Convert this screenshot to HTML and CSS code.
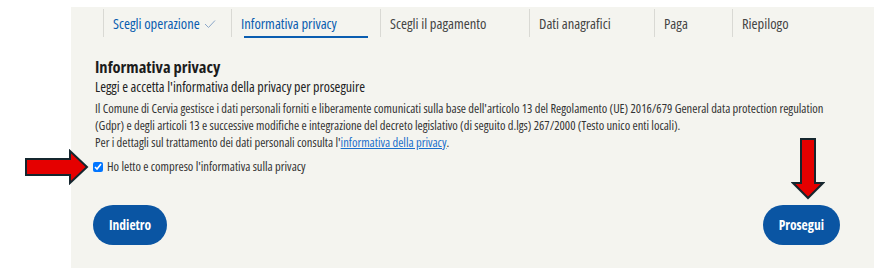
FILE: index.html
```html
<!DOCTYPE html>
<html lang="it">
  <head>
    <meta charset="UTF-8" />
    <title>Informativa privacy</title>
    <link rel="stylesheet" href="styles.css">
  </head>
  <body>
    <div class="panel">
      <ul class="steps">
        <li class="done">Scegli operazione <svg width="12" height="10" viewBox="0 0 12 10"><path d="M1 5 L4.5 8.5 L11 1.5" fill="none" stroke="#8aa6c8" stroke-width="1"/></svg></li>
        <li class="active">Informativa privacy</li>
        <li>Scegli il pagamento</li>
        <li>Dati anagrafici</li>
        <li>Paga</li>
        <li>Riepilogo</li>
      </ul>

      <div class="content">
        <h2>Informativa privacy</h2>
        <p class="lead">Leggi e accetta l'informativa della privacy per proseguire</p>
        <p class="text">Il Comune di Cervia gestisce i dati personali forniti e liberamente comunicati sulla base dell'articolo 13 del Regolamento (UE) 2016/679 General data protection regulation (Gdpr) e degli articoli 13 e successive modifiche e integrazione del decreto legislativo (di seguito d.lgs) 267/2000 (Testo unico enti locali).<br>Per i dettagli sul trattamento dei dati personali consulta l'<a href="#">informativa della privacy</a>.</p>
        <label class="check"><input type="checkbox" checked> Ho letto e compreso l'informativa sulla privacy</label>

        <div class="actions">
          <button class="btn">Indietro</button>
          <button class="btn">Prosegui</button>
        </div>
      </div>
    </div>

    <svg class="arrow arrow-right" width="64" height="36" viewBox="0 0 64 36">
      <path d="M1 10 L45 10 L45 2 L62 18 L45 34 L45 26 L1 26 Z" fill="#e50000" stroke="#15262e" stroke-width="2"/>
    </svg>
    <svg class="arrow arrow-down" width="34" height="62" viewBox="0 0 34 62">
      <path d="M10 1 L24 1 L24 45 L32 45 L17 60 L2 45 L10 45 Z" fill="#e50000" stroke="#15262e" stroke-width="2"/>
    </svg>
  </body>
</html>
```
FILE: styles.css
```css
* {
  box-sizing: border-box;
  margin: 0;
  padding: 0;
}
body {
  font-family: "Open Sans", sans-serif;
  font-stretch: 75%;
  background: #fff;
  color: #333;
  padding: 7px 8px 0 71px;
  height: 268px;
  overflow: hidden;
  position: relative;
}
.panel {
  background: #f4f4ef;
  height: 261px;
}
.steps {
  list-style: none;
  display: flex;
  padding: 2px 0 0 32px;
  height: 31px;
}
.steps li {
  border-left: 1px solid #d9d9d4;
  height: 28px;
  padding: 5px 0 0 9px;
  font-size: 14.5px;
  color: #444;
  white-space: nowrap;
  position: relative;
}
.steps li:nth-child(1) { width: 128px; }
.steps li:nth-child(2) { width: 149px; }
.steps li:nth-child(3) { width: 149px; }
.steps li:nth-child(4) { width: 125px; }
.steps li:nth-child(5) { width: 78px; }
.steps li.done,
.steps li.active {
  color: #0a5db0;
}
.steps li svg {
  margin-left: 2px;
}
.steps li.active::after {
  content: "";
  position: absolute;
  left: 12px;
  right: 12px;
  bottom: -1px;
  height: 2px;
  background: #0a5db0;
}
.content {
  padding: 19px 24px 0 24px;
}
.content h2 {
  font-size: 16.5px;
  font-weight: 700;
  color: #1c1c1c;
  line-height: 20px;
}
.lead {
  font-size: 14px;
  color: #222;
  line-height: 20px;
  margin-bottom: 3px;
}
.text {
  font-size: 12.5px;
  line-height: 17px;
  color: #333;
}
.text a {
  color: #1a6fcc;
}
.check {
  display: flex;
  align-items: center;
  gap: 4px;
  font-size: 12.5px;
  margin: 7px 0 0 -2px;
  color: #333;
}
.check input {
  width: 10px;
  height: 10px;
  margin: 0;
}
.actions {
  display: flex;
  justify-content: space-between;
  margin: 30px 10px 0 -2px;
}
.btn {
  background: #0a55a3;
  color: #fff;
  border: none;
  border-radius: 20px;
  height: 40px;
  padding: 0 16px;
  font-family: inherit;
  font-stretch: 75%;
  font-size: 13.5px;
  font-weight: 700;
}
.arrow {
  position: absolute;
}
.arrow-right {
  left: 25px;
  top: 149px;
}
.arrow-down {
  left: 791px;
  top: 138px;
}
```
